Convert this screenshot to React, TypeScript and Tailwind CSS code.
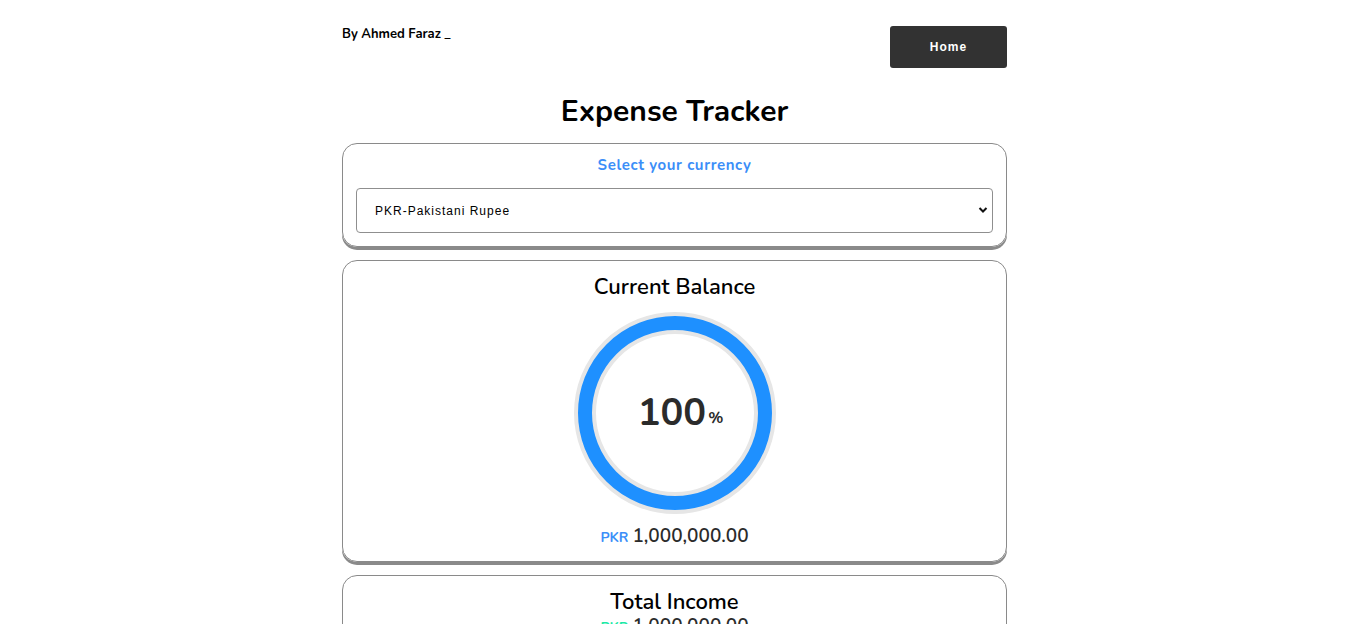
import React from "react";

const font = { fontFamily: "'Nunito', 'Lato', 'Noto Sans', sans-serif" };

function Ring() {
  return (
    <div className="relative w-[202px] h-[202px]">
      <svg width="202" height="202" viewBox="0 0 202 202" className="absolute inset-0">
        <circle cx="101" cy="101" r="90" fill="none" stroke="#e6e6e6" strokeWidth="22" />
        <circle cx="101" cy="101" r="90" fill="none" stroke="#1e90ff" strokeWidth="14" />
      </svg>
      <div className="absolute inset-0 flex items-center justify-center pl-[12px]">
        <span className="text-[38px] leading-none text-[#2b2b2b] font-bold">100</span>
        <span className="text-[16px] leading-none text-[#2b2b2b] font-bold mt-[9px] ml-[2px]">%</span>
      </div>
    </div>
  );
}

export default function App() {
  return (
    <div className="min-h-screen bg-white" style={font}>
      <div className="w-[665px] mx-auto">
        <div className="flex justify-between items-start pt-[26px]">
          <div className="text-[13px] font-bold text-black mt-[1px] leading-[14px]">By Ahmed Faraz _</div>
          <button
            className="w-[117px] h-[42px] bg-[#323232] rounded-[3px] text-white text-[12px] font-bold tracking-[1px]"
            style={{ fontFamily: "'Liberation Sans', Arial, sans-serif" }}
          >
            Home
          </button>
        </div>
        <h1 className="text-center text-[30px] font-bold text-black leading-[36px] mt-[26px]">Expense Tracker</h1>
        <div className="mt-[13px] border border-[#8a8a8a] rounded-[15px] shadow-[0_3px_0_#8a8a8a] px-[13px] pt-[11px] pb-[13px]">
          <div className="text-center text-[15px] font-bold text-[#3b8ef8] leading-[20px] tracking-[0.6px]">Select your currency</div>
          <div className="relative mt-[13px] h-[45px] border border-[#8f8f8f] rounded-[4px] flex items-center pl-[18px]">
            <span
              className="text-[12px] text-black tracking-[1px]"
              style={{ fontFamily: "'Liberation Sans', Arial, sans-serif" }}
            >
              PKR-Pakistani Rupee
            </span>
            <svg className="absolute right-[4px] top-[17px]" width="10" height="8" viewBox="0 0 10 8">
              <path d="M1.5 2 L5 5.5 L8.5 2" fill="none" stroke="#111" strokeWidth="2" />
            </svg>
          </div>
        </div>
        <div className="mt-[13px] border border-[#8a8a8a] rounded-[15px] shadow-[0_3px_0_#8a8a8a] pt-[12px] pb-[11px] flex flex-col items-center">
          <div className="text-[22px] font-semibold text-black leading-[28px]">Current Balance</div>
          <div className="mt-[11px]">
            <Ring />
          </div>
          <div className="mt-[10px] flex items-baseline gap-[4px] leading-[24px]">
            <span className="text-[14px] font-bold text-[#3b8ef8]">PKR</span>
            <span className="text-[19px] font-semibold text-[#2b2b2b]">1,000,000.00</span>
          </div>
        </div>
        <div className="mt-[13px] border border-[#8a8a8a] rounded-[15px] shadow-[0_3px_0_#8a8a8a] pt-[13px] pb-[12px] flex flex-col items-center">
          <div className="text-[22px] font-semibold text-black leading-[26px]">Total Income</div>
          <div className="flex items-baseline gap-[4px] leading-[22px]">
            <span className="text-[14px] font-bold text-[#1de9a6]">PKR</span>
            <span className="text-[19px] font-semibold text-[#2b2b2b]">1,000,000.00</span>
          </div>
        </div>
      </div>
    </div>
  );
}
